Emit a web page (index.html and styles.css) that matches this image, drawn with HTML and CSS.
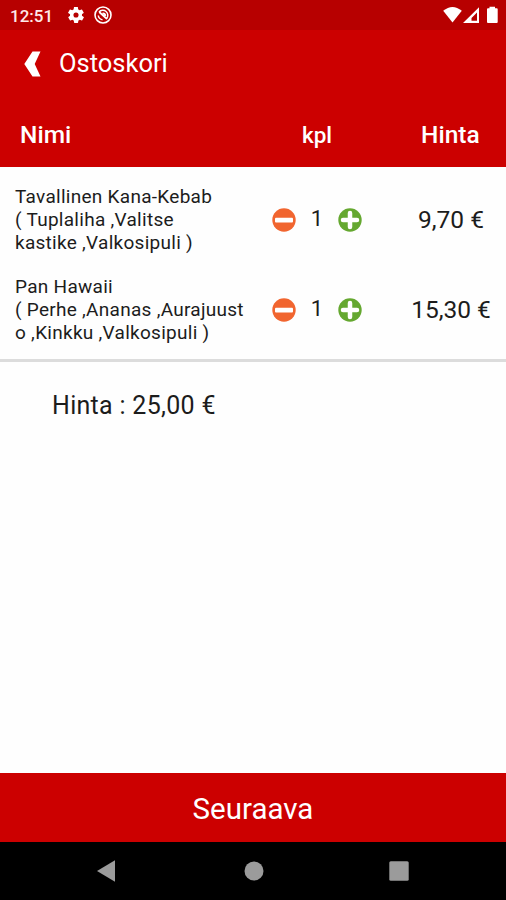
FILE: index.html
```html
<!DOCTYPE html>
<html lang="fi">
<head>
    <meta charset="UTF-8">
    <meta name="viewport" content="width=device-width, initial-scale=1.0">
    <title>Ostoskori</title>
    <link rel="stylesheet" href="styles.css">
</head>
<body>
    <div class="statusBar">
        <span class="clock">12:51</span>
        <svg class="gearIcon" width="16" height="16" viewBox="2 2 20 20">
            <path fill="#fff" fill-rule="evenodd" d="M19.4 13c0-.3.1-.6.1-1s0-.7-.1-1l2.1-1.600c.2-.2.2-.4.1-.6l-2-3.500c-.1-.2-.4-.3-.6-.2l-2.500 1c-.5-.4-1.100-.7-1.700-1l-.4-2.600c0-.2-.2-.4-.5-.4h-4c-.2 0-.5.2-.5.4l-.4 2.600c-.6.3-1.200.6-1.700 1l-2.500-1c-.2-.1-.5 0-.6.2l-2 3.500c-.1.2-.1.500.1.6L4.600 11c0 .3-.1.700-.1 1s0 .7.1 1l-2.100 1.600c-.2.2-.2.4-.1.600l2 3.500c.1.2.4.3.6.2l2.500-1c.5.4 1.100.7 1.700 1l.4 2.600c0 .2.2.4.5.4h4c.2 0 .5-.2.5-.4l.4-2.600c.6-.3 1.200-.6 1.700-1l2.500 1c.2.1.5 0 .6-.2l2-3.500c.1-.2.1-.5-.1-.6zM12 15.200a3.200 3.200 0 1 1 0-6.400 3.200 3.200 0 0 1 0 6.400z"/>
        </svg>
        <svg class="blockIcon" width="18" height="18" viewBox="0 0 18 18" fill="none" stroke="#fff">
            <circle cx="9" cy="9" r="8" stroke-width="1.600"/>
            <path d="M5 6A5 5 0 1 1 12.600 12.500M4.300 9.500A5 5 0 0 0 8.500 13.700" stroke-width="1.500"/>
            <path d="M5.200 6L13 13M8.500 7.500q2.500-.3 3 2.500" stroke-width="1.700"/>
        </svg>
        <svg class="signalIcons" width="56" height="18" viewBox="0 0 56 18" fill="#fff">
            <path d="M.2 4.800Q9.500-3 18.800 4.800L9.500 16.500z"/>
            <path fill-rule="evenodd" d="M20 17L36 1.200V17zM28.500 14.800H34V6.500L28.500 11.900z"/>
            <path d="M44 3.200q0-1 1-1h1.500V.8h5.500v1.400h1.700q1 0 1 1V16q0 1-1 1H45q-1 0-1-1z"/>
        </svg>
    </div>

    <header class="titleBar">
        <svg class="backIcon" width="17" height="26" viewBox="0 0 17 26">
            <path fill="#fff" d="M8.500.5H16.500L10.700 13L16.500 25.500H8.500L.3 13z"/>
        </svg>
        <h1>Ostoskori</h1>
    </header>

    <div class="cartHead">
        <div class="nameCaption">Nimi</div>
        <div class="countCaption">kpl</div>
        <div class="priceCaption">Hinta</div>
    </div>

    <div class="cartList">
        <div class="cartRow">
            <div class="itemName">Tavallinen Kana-Kebab<br>( Tuplaliha ,Valitse<br>kastike ,Valkosipuli )</div>
            <div class="itemCount">
                <svg width="24" height="24" viewBox="0 0 24 24">
                    <circle cx="12" cy="12" r="11.700" fill="#f1652f"/>
                    <rect x="3" y="9.800" width="18" height="4.600" rx="1" fill="#fff"/>
                </svg>
                <span>1</span>
                <svg width="24" height="24" viewBox="0 0 24 24">
                    <circle cx="12" cy="12" r="11.700" fill="#65a830"/>
                    <path d="M12 5v14M5 12h14" stroke="#fff" stroke-width="4.500" stroke-linecap="round"/>
                </svg>
            </div>
            <div class="itemPrice">9,70 €</div>
        </div>
        <div class="cartRow">
            <div class="itemName">Pan Hawaii<br>( Perhe ,Ananas ,Aurajuust<br>o ,Kinkku ,Valkosipuli )</div>
            <div class="itemCount">
                <svg width="24" height="24" viewBox="0 0 24 24">
                    <circle cx="12" cy="12" r="11.700" fill="#f1652f"/>
                    <rect x="3" y="9.800" width="18" height="4.600" rx="1" fill="#fff"/>
                </svg>
                <span>1</span>
                <svg width="24" height="24" viewBox="0 0 24 24">
                    <circle cx="12" cy="12" r="11.700" fill="#65a830"/>
                    <path d="M12 5v14M5 12h14" stroke="#fff" stroke-width="4.500" stroke-linecap="round"/>
                </svg>
            </div>
            <div class="itemPrice">15,30 €</div>
        </div>
    </div>

    <div class="total">Hinta : 25,00 €</div>

    <button class="nextButton" type="button">Seuraava</button>

    <div class="navBar">
        <svg width="18" height="22" viewBox="0 0 18 22"><path fill="#9b9b9b" d="M0 11L18 .3V21.700z"/></svg>
        <svg width="20" height="20" viewBox="0 0 20 20"><circle cx="10" cy="10" r="9.500" fill="#9b9b9b"/></svg>
        <svg width="20" height="20" viewBox="0 0 20 20"><rect x=".3" y=".3" width="19.400" height="19.400" rx="1.500" fill="#9b9b9b"/></svg>
    </div>
</body>
</html>
```

FILE: styles.css
```css
*{
    box-sizing: border-box;
}
body{
    margin: 0;
    height: 900px;
    display: flex;
    flex-direction: column;
    background: #fefefe;
    color: #1c1c1c;
    font-family: Roboto, sans-serif;
    overflow: hidden;
}
svg{
    display: block;
    flex: none;
}
.statusBar{
    height: 30px;
    padding: 0 7px 0 10px;
    display: flex;
    align-items: center;
    background: #b70000;
}
.clock{
    width: 58px;
    color: #ffe9e9;
    font-size: 17px;
    font-weight: 500;
    line-height: 30px;
    padding-top: 2px;
}
.blockIcon{
    margin-left: 10px;
}
.signalIcons{
    margin-left: auto;
}
.titleBar{
    height: 70px;
    padding: 20px 0 0 24px;
    display: flex;
    align-items: flex-start;
    background: #cc0000;
}
.backIcon{
    margin-top: 1px;
}
h1{
    margin: -3px 0 0 18px;
    color: #fff;
    font-size: 25.500px;
    font-weight: 400;
    line-height: 32px;
}
.cartHead{
    height: 67px;
    display: grid;
    grid-template-columns: 267px 100px 1fr;
    background: #cc0000;
    color: #fff;
    font-size: 24.500px;
    font-weight: 500;
    line-height: 69px;
}
.nameCaption{
    padding-left: 20px;
}
.countCaption{
    text-align: center;
    font-size: 22.500px;
    line-height: 70px;
}
.priceCaption{
    padding-left: 54px;
}
.cartList{
    height: 195px;
    padding-top: 18px;
    border-bottom: 3px solid #dcdcdc;
}
.cartRow{
    height: 90px;
    display: grid;
    grid-template-columns: 267px 100px 1fr;
}
.itemName{
    padding-left: 15px;
    font-size: 19px;
    line-height: 23px;
    letter-spacing: 0.28px;
    white-space: nowrap;
}
.itemCount{
    height: 69px;
    display: flex;
    align-items: center;
    justify-content: center;
    font-size: 22px;
}
.itemCount span{
    width: 42px;
    text-align: center;
    padding-bottom: 3px;
}
.itemPrice{
    padding-left: 29px;
    font-size: 24.500px;
    line-height: 70px;
    text-align: center;
    white-space: nowrap;
}
.total{
    padding-left: 52px;
    margin-top: 28px;
    font-size: 25px;
    line-height: 32px;
    letter-spacing: 0.3px;
}
.nextButton{
    height: 69px;
    margin-top: auto;
    padding: 2px 0 0;
    border: none;
    background: #cc0000;
    color: #fff;
    font-family: inherit;
    font-size: 29.500px;
}
.navBar{
    height: 58px;
    flex: none;
    padding: 0 97px;
    display: flex;
    align-items: center;
    justify-content: space-between;
    background: #000;
}
.navBar svg:nth-child(2){
    margin-left: 3px;
}
```
